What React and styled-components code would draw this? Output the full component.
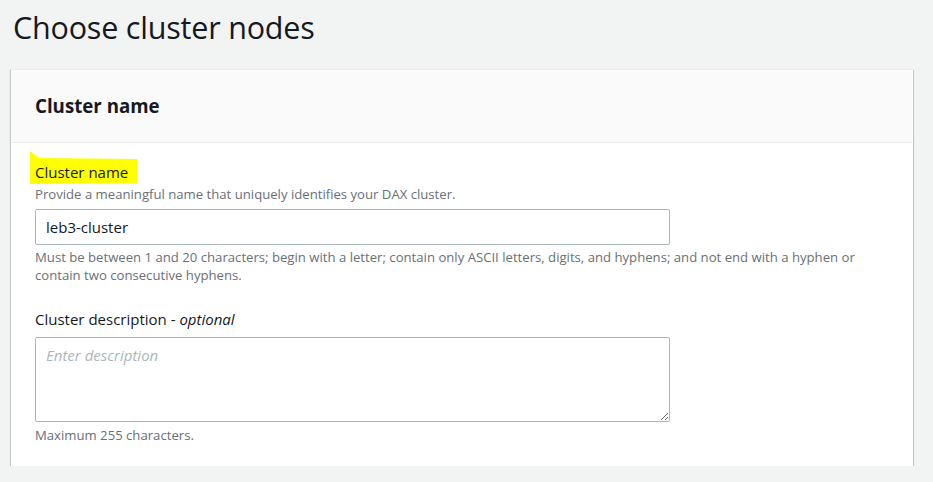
import React from "react";
import styled, { createGlobalStyle } from "styled-components";

const Global = createGlobalStyle`
  html, body { margin: 0; padding: 0; background: #f2f3f3; }
  body { font-family: "Open Sans", "Liberation Sans", sans-serif; color: #16191f; }
  * { box-sizing: border-box; }
`;

const Page = styled.div`
  padding: 6px 20px 0 11px;
  width: 933px;
`;

const Title = styled.h1`
  margin: 0 0 0 2px;
  font-size: 30.5px;
  font-weight: 400;
  line-height: 42px;
  color: #16191f;
  letter-spacing: -0.2px;
`;

const Card = styled.section`
  margin-top: 21px;
  width: 902px;
  background: #fff;
  border-top: 1px solid #eaeded;
  box-shadow: 0 1px 1px 0 rgba(0, 28, 36, 0.3), 1px 1px 1px 0 rgba(0, 28, 36, 0.15), -1px 1px 1px 0 rgba(0, 28, 36, 0.15);
`;

const CardHeader = styled.header`
  background: #fafafa;
  border-bottom: 1px solid #eaeded;
  height: 73px;
  display: flex;
  align-items: center;
  padding: 0 24px;
`;

const CardTitle = styled.h2`
  margin: 0;
  font-size: 18.7px;
  font-weight: 700;
  line-height: 24px;
`;

const CardBody = styled.div`
  padding: 18px 24px 22px;
  display: flex;
  flex-direction: column;
  gap: 24px;
`;

const Field = styled.div`
  display: flex;
  flex-direction: column;
`;

const Label = styled.label`
  font-size: 15px;
  line-height: 22px;
  color: #16191f;
  em { font-style: italic; }
`;

const Highlight = styled.span`
  display: inline-block;
  background: #ffff00;
  padding: 10px 9px 1px 5px;
  margin: -10px 0 -1px -5px;
  clip-path: polygon(0 0, 4px 3px, 9px 7px, 100% 8px, 100% 97%, 0 100%);
`;

const Desc = styled.div`
  font-size: 13.15px;
  line-height: 18px;
  color: #687078;
`;

const Hint = styled(Desc)`
  margin-top: 2px;
`;

const Input = styled.input`
  margin-top: 6px;
  width: 635px;
  height: 36px;
  border: 1px solid #aab7b8;
  border-radius: 2px;
  padding: 0 10px;
  font-family: inherit;
  font-size: 15px;
  color: #16191f;
  outline: none;
`;

const TextArea = styled.textarea`
  margin-top: 7px;
  width: 635px;
  height: 85px;
  border: 1px solid #aab7b8;
  border-radius: 2px;
  padding: 6px 10px;
  font-family: inherit;
  font-size: 15px;
  line-height: 22px;
  color: #16191f;
  resize: vertical;
  outline: none;
  display: block;
  &::placeholder { color: #aab7b8; font-style: italic; }
`;

const Constraint = styled(Desc)`
  margin-top: ${(p) => p.$gap || 3}px;
`;

export default function App() {
  return (
    <>
      <Global />
      <Page>
        <Title>Choose cluster nodes</Title>
        <Card>
          <CardHeader>
            <CardTitle>Cluster name</CardTitle>
          </CardHeader>
          <CardBody>
            <Field>
              <Label as="div">
                <Highlight>Cluster name</Highlight>
              </Label>
              <Hint>Provide a meaningful name that uniquely identifies your DAX cluster.</Hint>
              <Input defaultValue="leb3-cluster" />
              <Constraint $gap={3}>
                Must be between 1 and 20 characters; begin with a letter; contain only ASCII letters, digits, and hyphens; and not end with a hyphen or contain two consecutive hyphens.
              </Constraint>
            </Field>
            <Field>
              <Label>
                Cluster description - <em>optional</em>
              </Label>
              <TextArea placeholder="Enter description" />
              <Constraint $gap={4}>Maximum 255 characters.</Constraint>
            </Field>
          </CardBody>
        </Card>
      </Page>
    </>
  );
}
